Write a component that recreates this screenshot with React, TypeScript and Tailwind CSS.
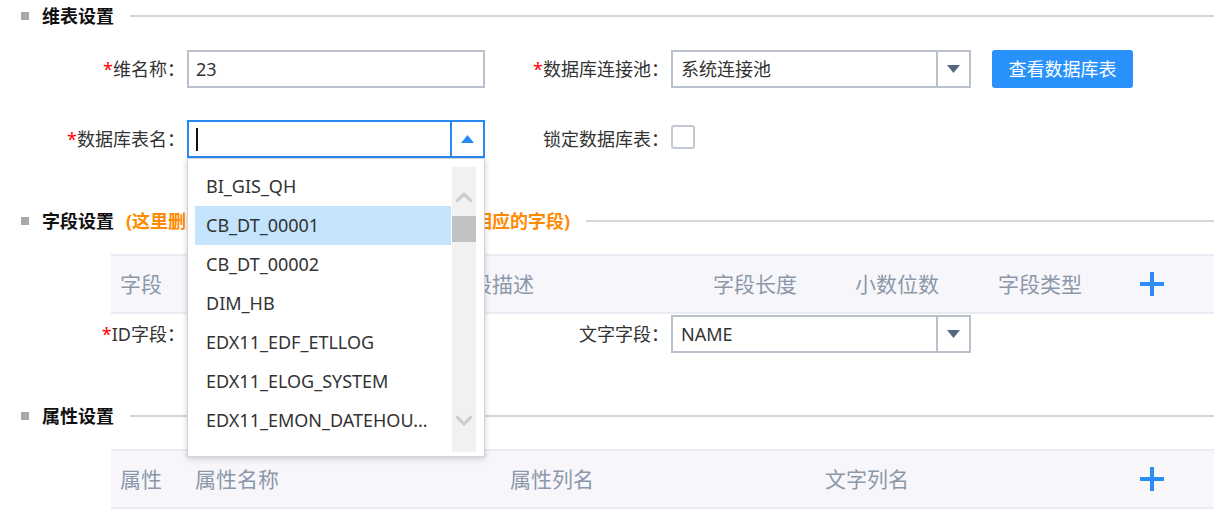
import React from "react";

function SectionHeader({ title, note }: { title: string; note?: string }) {
  return (
    <div className="flex h-[32px] items-center pl-[21px]">
      <span className="h-[8px] w-[8px] shrink-0 bg-[#a9a9a9]" />
      <span className="ml-[13px] shrink-0 text-[18px] font-bold leading-none text-[#111]">{title}</span>
      {note && (
        <span className="ml-[12px] shrink-0 whitespace-nowrap text-[18px] font-bold leading-none text-[#ff8a00]">
          {note}
        </span>
      )}
      <span className="ml-[16px] h-[2px] flex-1 bg-[#d6d6d6]" />
    </div>
  );
}

function Label({ text, required, w }: { text: string; required?: boolean; w: string }) {
  return (
    <div className={`${w} shrink-0 whitespace-nowrap text-right text-[18px] leading-none text-[#333]`}>
      {required && <span className="text-[#f00]">*</span>}
      {text}
    </div>
  );
}

function Tri({ up, color }: { up?: boolean; color: string }) {
  return (
    <svg width="13" height="8" viewBox="0 0 13 8">
      {up ? <polygon points="0,8 13,8 6.5,0" fill={color} /> : <polygon points="0,0 13,0 6.5,8" fill={color} />}
    </svg>
  );
}

function Select({ value, w }: { value: string; w: string }) {
  return (
    <div className={`${w} ml-[2px] flex h-[38px] shrink-0 border-2 border-[#b9c0cc] bg-white`}>
      <div className="flex flex-1 items-center pl-[8px] text-[18px] text-[#333]">{value}</div>
      <div className="flex w-[33px] items-center justify-center border-l-2 border-[#b9c0cc]">
        <Tri color="#56667d" />
      </div>
    </div>
  );
}

function Chevron({ up }: { up?: boolean }) {
  return (
    <svg width="18" height="11" viewBox="0 0 18 11">
      <polyline
        points={up ? "1.5,9.5 9,2 16.5,9.5" : "1.5,1.5 9,9 16.5,1.5"}
        fill="none"
        stroke="#cbcbcb"
        strokeWidth="3"
      />
    </svg>
  );
}

function Plus() {
  return (
    <svg width="24" height="24" viewBox="0 0 24 24">
      <rect x="10" y="0" width="4" height="24" fill="#2c8df4" />
      <rect x="0" y="10" width="24" height="4" fill="#2c8df4" />
    </svg>
  );
}

const items = [
  "BI_GIS_QH",
  "CB_DT_00001",
  "CB_DT_00002",
  "DIM_HB",
  "EDX11_EDF_ETLLOG",
  "EDX11_ELOG_SYSTEM",
  "EDX11_EMON_DATEHOU...",
];

export default function App() {
  return (
    <div className="h-[513px] w-[1214px] overflow-hidden bg-white font-['Noto_Sans','Noto_Sans_CJK_SC',sans-serif]">
      <SectionHeader title="维表设置" />

      {/* row 1 */}
      <div className="mt-[18px] flex h-[38px] items-center">
        <Label text="维名称：" required w="w-[185px]" />
        <div className="ml-[2px] flex h-[38px] w-[298px] shrink-0 items-center border-2 border-[#b9c0cc] pl-[7px] text-[18px] text-[#333]">
          23
        </div>
        <Label text="数据库连接池：" required w="w-[184px]" />
        <Select value="系统连接池" w="w-[300px]" />
        <button className="ml-[21px] h-[38px] w-[141px] shrink-0 rounded-[3px] bg-[#2991fb] text-[18px] text-white">
          查看数据库表
        </button>
      </div>

      {/* row 2 */}
      <div className="mt-[32px] flex h-[38px] items-center">
        <Label text="数据库表名：" required w="w-[185px]" />
        <div className="relative ml-[2px] h-[38px] w-[298px] shrink-0">
          <div className="flex h-full w-full border-2 border-[#2a8af4] bg-white">
            <div className="flex flex-1 items-center pl-[7px]">
              <span className="h-[23px] w-[2px] bg-[#111]" />
            </div>
            <div className="flex w-[33px] items-center justify-center border-l-2 border-[#2a8af4]">
              <Tri up color="#2a8af4" />
            </div>
          </div>
          <div className="absolute left-0 top-full z-10 flex h-[299px] w-[298px] border border-[#d3d3d3] bg-white pl-[7px] pr-[8px] pt-[8px] shadow-[0_2px_6px_rgba(0,0,0,0.18)]">
            <div className="w-[257px] shrink-0">
              {items.map((it, i) => (
                <div
                  key={it}
                  className={`flex h-[39px] w-[256px] items-center overflow-hidden whitespace-nowrap pl-[11px] text-[18px] text-[#333] ${
                    i === 1 ? "bg-[#c4e3fc]" : ""
                  }`}
                >
                  {it}
                </div>
              ))}
            </div>
            <div className="flex h-[285px] w-[24px] shrink-0 flex-col bg-[#f1f1f1]">
              <div className="flex h-[49px] items-end justify-center pb-[13px]">
                <Chevron up />
              </div>
              <div className="h-[26px] bg-[#c1c1c1]" />
              <div className="flex-1" />
              <div className="flex h-[49px] items-start justify-center pt-[12px]">
                <Chevron />
              </div>
            </div>
          </div>
        </div>
        <Label text="锁定数据库表：" w="w-[184px]" />
        <div className="mb-[4px] ml-[2px] h-[24px] w-[24px] shrink-0 rounded-[3px] border-2 border-[#c3c9d3] bg-white" />
      </div>

      <div className="mt-[47px]">
        <SectionHeader title="字段设置" note="(这里删除字段后，不会同步删除数据库表中相应的字段)" />
      </div>

      <div className="ml-[111px] mt-[17px] flex h-[60px] items-center border-y-2 border-[#e9ecf3] bg-[#f7f7fb] pl-[9px] text-[21px] leading-none text-[#8c98aa]">
        <div className="w-[75px] shrink-0">字段</div>
        <div className="w-[255px] shrink-0">字段名称</div>
        <div className="w-[263px] shrink-0">字段描述</div>
        <div className="w-[142px] shrink-0">字段长度</div>
        <div className="w-[143px] shrink-0">小数位数</div>
        <div className="w-[142px] shrink-0">字段类型</div>
        <Plus />
      </div>

      <div className="mt-[1px] flex h-[38px] items-center">
        <Label text="ID字段：" required w="w-[185px]" />
        <div className="ml-[2px] h-[38px] w-[298px] shrink-0 border-2 border-[#b9c0cc]" />
        <Label text="文字字段：" w="w-[184px]" />
        <Select value="NAME" w="w-[300px]" />
      </div>

      <div className="mt-[47px]">
        <SectionHeader title="属性设置" />
      </div>

      <div className="ml-[111px] mt-[17px] flex h-[60px] items-center border-y-2 border-[#e9ecf3] bg-[#f7f7fb] pl-[9px] text-[21px] leading-none text-[#8c98aa]">
        <div className="w-[75px] shrink-0">属性</div>
        <div className="w-[315px] shrink-0">属性名称</div>
        <div className="w-[315px] shrink-0">属性列名</div>
        <div className="w-[315px] shrink-0">文字列名</div>
        <Plus />
      </div>
    </div>
  );
}
